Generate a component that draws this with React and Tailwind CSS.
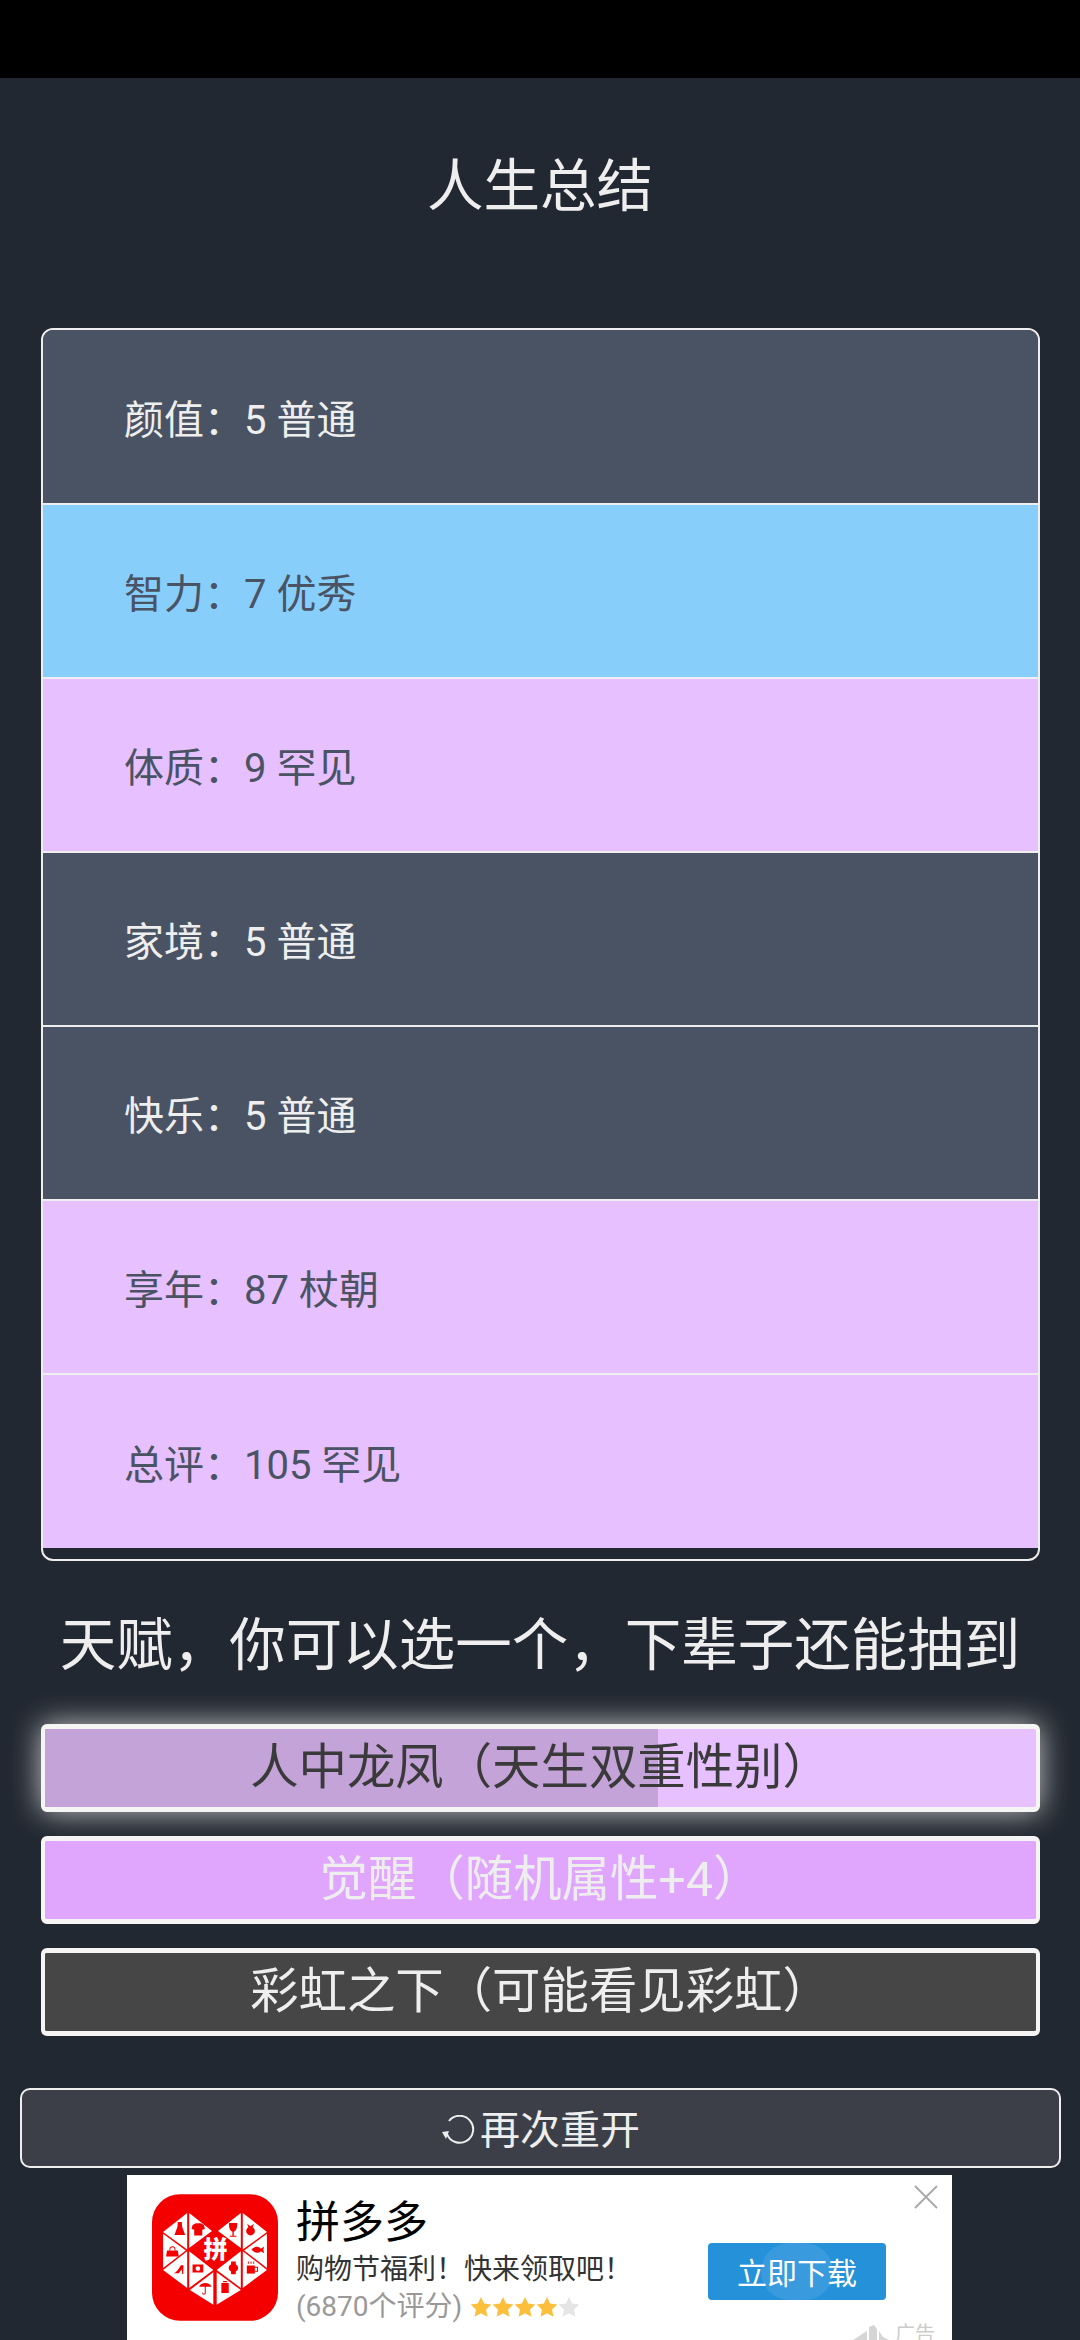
const stats = [
  { label: "颜值\uFF1A5 普通", bg: "bg-[#4a5363]", text: "text-[#eeeeee]" },
  { label: "智力\uFF1A7 优秀", bg: "bg-[#87cefa]", text: "text-[#4a5363]" },
  { label: "体质\uFF1A9 罕见", bg: "bg-[#e6c0ff]", text: "text-[#4a5363]" },
  { label: "家境\uFF1A5 普通", bg: "bg-[#4a5363]", text: "text-[#eeeeee]" },
  { label: "快乐\uFF1A5 普通", bg: "bg-[#4a5363]", text: "text-[#eeeeee]" },
  { label: "享年\uFF1A87 杖朝", bg: "bg-[#e6c0ff]", text: "text-[#4a5363]" },
  { label: "总评\uFF1A105 罕见", bg: "bg-[#e6c0ff]", text: "text-[#4a5363]" },
];

// white triangles of the heart, in the coordinates of the logo's viewBox
const triangles = [
  "100,155 172,98 172,207",
  "178,98 250,155 178,207",
  "260,155 332,98 332,207",
  "338,98 410,155 338,207",
  "100,160 168,210 100,262",
  "342,210 410,160 410,262",
  "100,268 172,212 172,322",
  "178,212 250,268 178,322",
  "260,268 332,212 332,322",
  "338,212 410,268 338,322",
  "180,328 250,275 250,372",
  "260,275 332,328 260,372",
];

function PddLogo() {
  return (
    <svg viewBox="67 42 376 378" className="w-[126px] h-[127px] shrink-0">
      <rect x="67" y="42" width="376" height="378" rx="84" fill="#f40000" />
      {triangles.map((p) => (
        <polygon key={p} points={p} fill="#ffffff" />
      ))}
      <g fill="#f40000">
        {/* dress */}
        <path d="M144 125h12l1 14 9 25h-32l9-25z" />
        {/* shirt */}
        <path d="M188 134l10-5h14l10 5 3 12-8 2v17h-24v-17l-8-2z" />
        {/* glass */}
        <path d="M297 128h24c1 15-3 24-10 26v12h8v3h-20v-3h8v-12c-7-2-11-11-10-26z" />
        {/* apple */}
        <circle cx="361" cy="152" r="13" />
        <path d="M351 130l10 8 10-8-4 12h-12z" />
        {/* bag */}
        <path d="M112 210h32l3 18h-38z" />
        <path d="M120 210c0-15 16-15 16 0" fill="none" stroke="#f40000" strokeWidth="3" />
        {/* fish */}
        <path d="M364 207c8-10 20-10 28-2l10-7-3 10 3 10-10-6c-8 8-20 6-28-5z" />
        {/* shoe */}
        <path d="M131 278c8-2 14-10 22-24h8l-1 26h-3l-1-14-9 12z" />
        {/* camera */}
        <path fillRule="evenodd" d="M188 252h32v24h-32zM204 257a7 7 0 100 14 7 7 0 000-14z" />
        {/* watch */}
        <path d="M303 243h14v8a12 12 0 010 22v8h-14v-8a12 12 0 010-22z" />
        {/* cup */}
        <path d="M350 255h24v24h-24z" />
        <path d="M374 260h8v12h-8" fill="none" stroke="#f40000" strokeWidth="3" />
        <path d="M353 243h3v7h-3zM361 243h3v7h-3zM369 243h3v7h-3z" />
        {/* umbrella */}
        <path d="M208 318c3-15 33-15 36 0z" />
        <path d="M226 316v20c0 6-8 6-8 0" fill="none" stroke="#f40000" strokeWidth="3" />
        {/* box */}
        <path d="M274 307h22v30h-22zM279 301h12v4h-12z" />
      </g>
      <path d="M255 145L335 205 255 268 175 205z" fill="#f40000" />
      <text
        x="257"
        y="234"
        textAnchor="middle"
        fill="#ffffff"
        fontSize="72"
        fontWeight="900"
        fontFamily="'Noto Sans CJK SC', sans-serif"
      >
        拼
      </text>
    </svg>
  );
}

function Star({ color }) {
  return (
    <svg viewBox="0 0 24 24" className="w-[22px] h-[22px]" fill={color}>
      <path d="M12 1l3.4 7.3 7.9 1-5.8 5.4 1.5 7.9-7-3.9-7 3.9 1.5-7.9L.7 9.3l7.9-1z" />
    </svg>
  );
}

export default function App() {
  return (
    <div
      className="w-[1080px] h-[2340px] overflow-hidden bg-[#222831] flex flex-col"
      style={{ fontFamily: "Roboto, 'Noto Sans CJK SC', sans-serif" }}
    >
      <div className="h-[78px] bg-black shrink-0"></div>

      <h1 className="mt-[81px] mb-[113px] h-[56px] text-[56.5px] leading-[56px] text-center text-[#eeeeee]">人生总结</h1>

      <div className="ml-[41px] mr-[40px] h-[1233px] shrink-0 border-2 border-[#eeeeee] rounded-[12px] overflow-hidden">
        {stats.map((s) => (
          <div
            key={s.label}
            className={`h-[174px] first:h-[175px] last:h-[173px] flex items-center pl-[81px] pt-[8px] text-[40px] border-b-2 border-[#eeeeee] last:border-b-0 ${s.bg} ${s.text}`}
          >
            {s.label}
          </div>
        ))}
      </div>

      <h2 className="mt-[57px] mb-[50px] h-[56px] text-[56.5px] leading-[56px] text-center text-[#eeeeee]">
        {"天赋\uFF0C你可以选一个\uFF0C下辈子还能抽到"}
      </h2>

      <div className="ml-[41px] mr-[40px] flex flex-col gap-[24px]">
        <div className="relative h-[88px] flex items-center justify-center border-x-[4px] border-y-[5px] border-[#f5f5f5] rounded-[6px] bg-[#e6c0ff] text-[48.4px] text-[#3a3a3a] shadow-[0_0_30px_rgba(238,238,238,0.8)]">
          <div className="absolute left-0 top-0 bottom-0 w-[613px] bg-[#c4a3d9]"></div>
          <span className="relative">{"人中龙凤\uFF08天生双重性别\uFF09"}</span>
        </div>
        <div className="h-[88px] flex items-center justify-center border-x-[4px] border-y-[5px] border-[#f5f5f5] rounded-[6px] bg-[#e0a6fd] text-[48.4px] text-[#eeeeee]">
          {"觉醒\uFF08随机属性+4\uFF09"}
        </div>
        <div className="h-[88px] flex items-center justify-center border-x-[4px] border-y-[5px] border-[#f5f5f5] rounded-[6px] bg-[#464646] text-[48.4px] text-[#eeeeee]">
          {"彩虹之下\uFF08可能看见彩虹\uFF09"}
        </div>
      </div>

      <div className="mt-[52px] ml-[20px] mr-[19px] h-[80px] shrink-0 flex items-center justify-center gap-[5px] pt-[5px] border-2 border-[#eeeeee] rounded-[10px] bg-[#3c3f48] text-[40px] text-[#eeeeee]">
        <svg viewBox="0 0 34 32" className="w-[34px] h-[32px]" fill="none">
          <path d="M8 6a13.5 13.5 0 1 1-2 13" stroke="#eeeeee" strokeWidth="2" />
          <path d="M1 17l7-1-3 8z" fill="#eeeeee" />
        </svg>
        再次重开
      </div>

      <div
        className="relative mt-[7px] ml-[127px] w-[825px] h-[165px] shrink-0 overflow-hidden bg-white flex items-start pl-[25px] pt-[19px]"
        style={{ fontFamily: "'Noto Sans CJK SC', Roboto, sans-serif" }}
      >
        <PddLogo />
        <div className="ml-[18px] w-[392px] flex flex-col">
          <div className="text-[44px] leading-[50px] text-black">拼多多</div>
          <div className="mt-[3px] text-[28px] leading-[40px] text-[#333333]">{"购物节福利\uFF01快来领取吧\uFF01"}</div>
          <div className="flex items-center text-[28px] leading-[40px] text-[#999999]">
            <span style={{ fontFamily: "Roboto, 'Noto Sans CJK SC', sans-serif" }}>(6870个评分)</span>
            <div className="ml-[8px] flex">
              <Star color="#fcbf3b" />
              <Star color="#fcbf3b" />
              <Star color="#fcbf3b" />
              <Star color="#fcbf3b" />
              <Star color="#e5e5e5" />
            </div>
          </div>
        </div>
        <div className="relative mt-[49px] ml-[20px] w-[178px] h-[57px] rounded-[4px] bg-[#2491d9] flex items-center justify-center text-[30px] text-white overflow-hidden">
          <div className="absolute left-[53px] top-0 w-[72px] h-[57px] rounded-full bg-[#3a9ade]"></div>
          <span className="relative">立即下载</span>
        </div>

        <svg viewBox="0 0 24 24" className="absolute top-[10px] right-[14px] w-[24px] h-[24px]" stroke="#aaaaaa" strokeWidth="2">
          <path d="M1 1l22 22M23 1L1 23" />
        </svg>
        <div className="absolute left-[726px] top-[146px] flex items-center gap-[6px] text-[20px] leading-[24px] text-[#cccccc]">
          <svg viewBox="0 0 36 16" className="w-[36px] h-[16px]" fill="#d5d5d5">
            <path d="M0 15L14 6v9zM16 15V2l5-2 3 4v11zM26 15V6l4 6 6 3z" />
          </svg>
          广告
        </div>
      </div>
    </div>
  );
}
